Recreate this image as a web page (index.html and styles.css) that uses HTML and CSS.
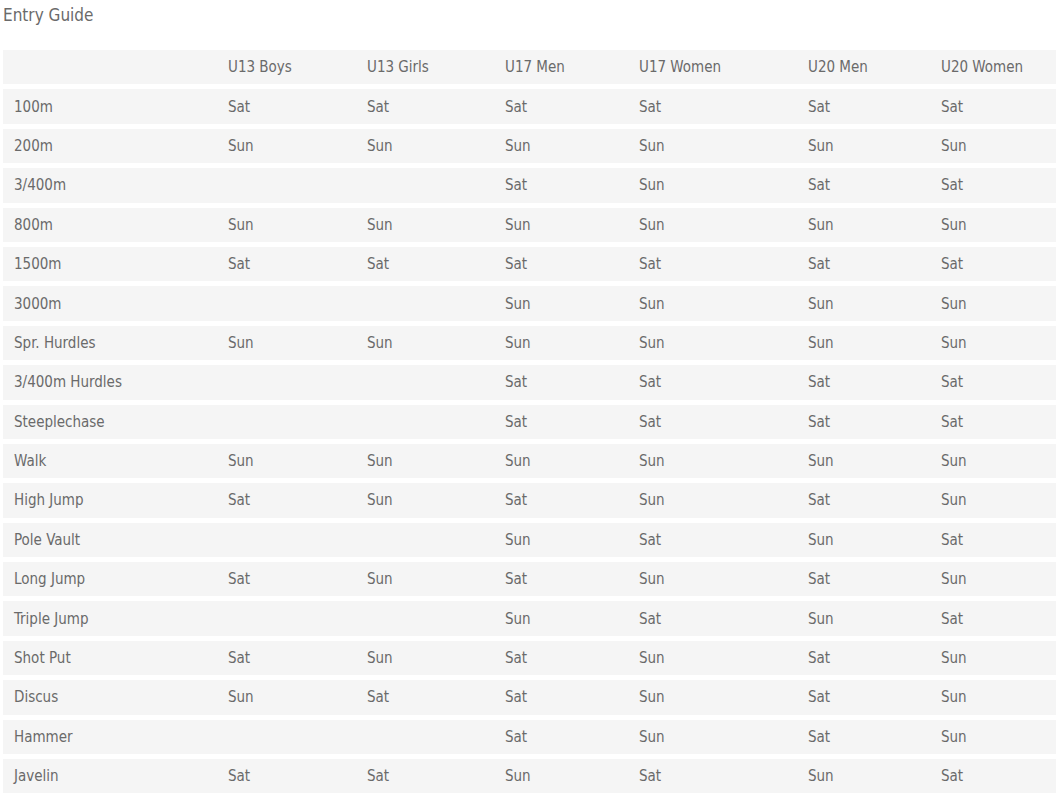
FILE: index.html
```html
<!DOCTYPE html>
<html>
<head>
<meta charset="utf-8">
<link rel="stylesheet" href="styles.css">
</head>
<body>
<div class="page">
  <h2 class="title">Entry Guide</h2>
  <table class="guide">
    <colgroup>
      <col class="c0"><col class="c1"><col class="c2"><col class="c3"><col class="c4"><col class="c5"><col class="c6">
    </colgroup>
    <thead>
      <tr><th></th><th>U13 Boys</th><th>U13 Girls</th><th>U17 Men</th><th>U17 Women</th><th>U20 Men</th><th>U20 Women</th></tr>
    </thead>
    <tbody>
      <tr><td>100m</td><td>Sat</td><td>Sat</td><td>Sat</td><td>Sat</td><td>Sat</td><td>Sat</td></tr>
      <tr><td>200m</td><td>Sun</td><td>Sun</td><td>Sun</td><td>Sun</td><td>Sun</td><td>Sun</td></tr>
      <tr><td>3/400m</td><td></td><td></td><td>Sat</td><td>Sun</td><td>Sat</td><td>Sat</td></tr>
      <tr><td>800m</td><td>Sun</td><td>Sun</td><td>Sun</td><td>Sun</td><td>Sun</td><td>Sun</td></tr>
      <tr><td>1500m</td><td>Sat</td><td>Sat</td><td>Sat</td><td>Sat</td><td>Sat</td><td>Sat</td></tr>
      <tr><td>3000m</td><td></td><td></td><td>Sun</td><td>Sun</td><td>Sun</td><td>Sun</td></tr>
      <tr><td>Spr. Hurdles</td><td>Sun</td><td>Sun</td><td>Sun</td><td>Sun</td><td>Sun</td><td>Sun</td></tr>
      <tr><td>3/400m Hurdles</td><td></td><td></td><td>Sat</td><td>Sat</td><td>Sat</td><td>Sat</td></tr>
      <tr><td>Steeplechase</td><td></td><td></td><td>Sat</td><td>Sat</td><td>Sat</td><td>Sat</td></tr>
      <tr><td>Walk</td><td>Sun</td><td>Sun</td><td>Sun</td><td>Sun</td><td>Sun</td><td>Sun</td></tr>
      <tr><td>High Jump</td><td>Sat</td><td>Sun</td><td>Sat</td><td>Sun</td><td>Sat</td><td>Sun</td></tr>
      <tr><td>Pole Vault</td><td></td><td></td><td>Sun</td><td>Sat</td><td>Sun</td><td>Sat</td></tr>
      <tr><td>Long Jump</td><td>Sat</td><td>Sun</td><td>Sat</td><td>Sun</td><td>Sat</td><td>Sun</td></tr>
      <tr><td>Triple Jump</td><td></td><td></td><td>Sun</td><td>Sat</td><td>Sun</td><td>Sat</td></tr>
      <tr><td>Shot Put</td><td>Sat</td><td>Sun</td><td>Sat</td><td>Sun</td><td>Sat</td><td>Sun</td></tr>
      <tr><td>Discus</td><td>Sun</td><td>Sat</td><td>Sat</td><td>Sun</td><td>Sat</td><td>Sun</td></tr>
      <tr><td>Hammer</td><td></td><td></td><td>Sat</td><td>Sun</td><td>Sat</td><td>Sun</td></tr>
      <tr><td>Javelin</td><td>Sat</td><td>Sat</td><td>Sun</td><td>Sat</td><td>Sun</td><td>Sat</td></tr>
    </tbody>
  </table>
</div>
</body>
</html>
```
FILE: styles.css
```css
html, body {
  margin: 0;
  padding: 0;
  background: #ffffff;
}
.page {
  padding: 0 0 0 3px;
  font-family: "DejaVu Sans Condensed", "DejaVu Sans", sans-serif;
  color: #6a6a6a;
}
.title {
  margin: 0;
  padding-top: 4px;
  font-size: 17px;
  font-weight: normal;
  line-height: 22px;
  height: 46px;
}
.guide {
  width: 1053px;
  table-layout: fixed;
  border-collapse: separate;
  border-spacing: 0 5px;
  margin-top: -5px;
  font-size: 15px;
}
.c0 { width: 214px; }
.c1 { width: 139px; }
.c2 { width: 138px; }
.c3 { width: 134px; }
.c4 { width: 169px; }
.c5 { width: 133px; }
.c6 { width: 126px; }
.guide th, .guide td {
  background: #f5f5f5;
  text-align: left;
  font-weight: normal;
  height: 34.4px;
  padding: 0 11px;
  box-sizing: border-box;
  vertical-align: middle;
  white-space: nowrap;
}
```
